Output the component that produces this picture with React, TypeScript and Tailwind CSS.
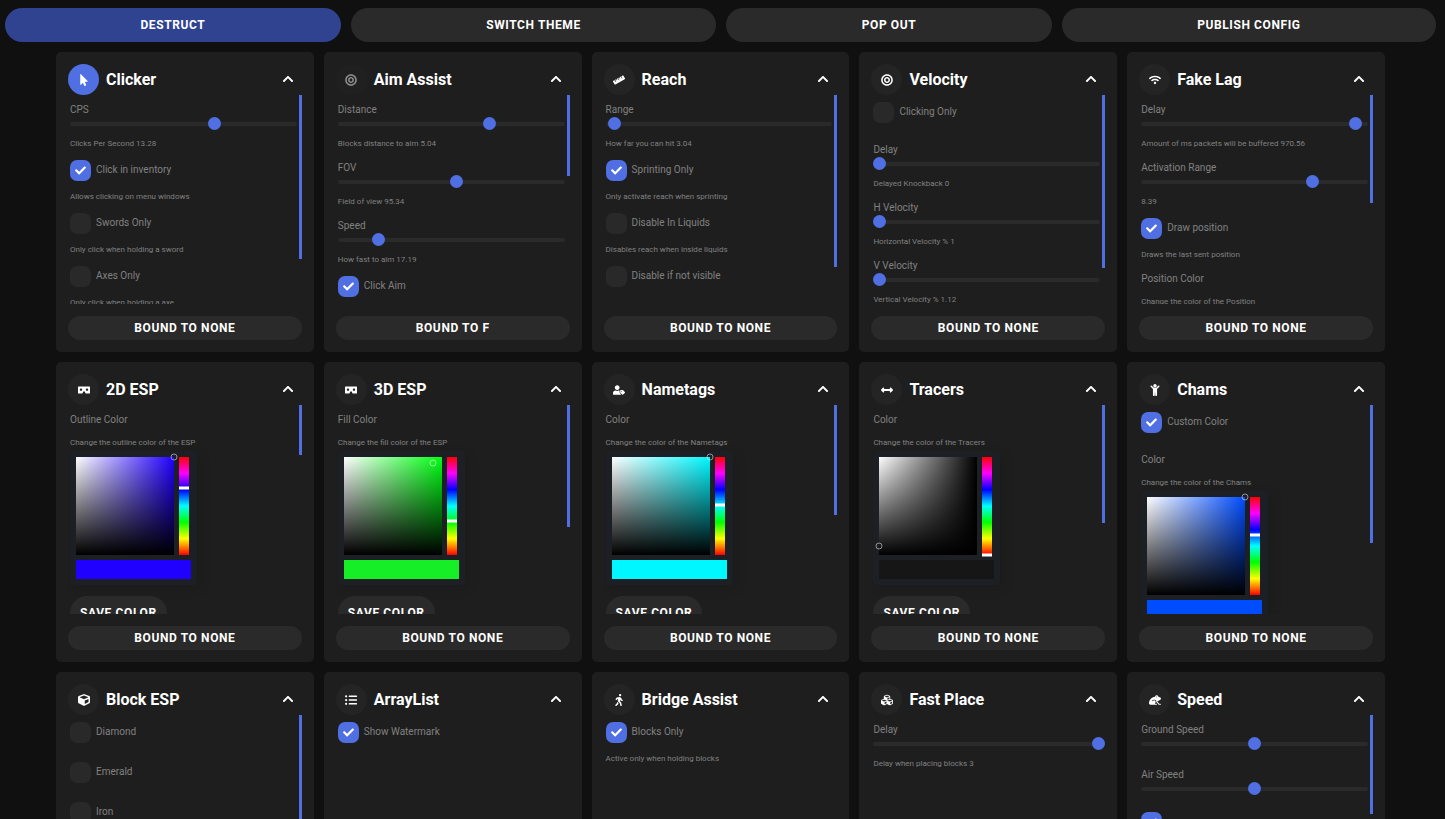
import { FC, ReactNode, useId } from 'react';
import { IconType } from 'react-icons';
import {
  FaArrowsAltH,
  FaBullseye,
  FaCheck,
  FaChevronUp,
  FaChild,
  FaCube,
  FaCubes,
  FaFrog,
  FaListUl,
  FaMousePointer,
  FaRuler,
  FaUserTag,
  FaVrCardboard,
  FaWalking,
  FaWifi,
} from 'react-icons/fa';
import clsx from 'clsx';

const Description: FC<{ text?: string }> = ({ text }) =>
  text ? <p className="h-[13px] text-[8px] leading-[11px] whitespace-nowrap">{text}</p> : null;

const Slider: FC<{ label: string; value: number; text?: string }> = ({ label, value, text }) => {
  const id = useId();
  return (
    <div className="pb-[2px]">
      <div className="flex h-[43px] flex-col pt-2">
        <label htmlFor={id} className="text-[10px] leading-[14px]">
          {label}
        </label>
        <input
          id={id}
          type="range"
          step="any"
          defaultValue={value}
          className="block h-[13px] w-full appearance-none bg-transparent [&::-webkit-slider-runnable-track]:h-1 [&::-webkit-slider-runnable-track]:rounded-full [&::-webkit-slider-runnable-track]:bg-[#2a2a2a] [&::-webkit-slider-thumb]:-mt-[5px] [&::-webkit-slider-thumb]:size-[13px] [&::-webkit-slider-thumb]:appearance-none [&::-webkit-slider-thumb]:rounded-full [&::-webkit-slider-thumb]:bg-[#4f6fe3]"
        />
      </div>
      <Description text={text} />
    </div>
  );
};

const Toggle: FC<{ label?: string; checked?: boolean; text?: string }> = ({ label, checked, text }) => (
  <div className="pb-[2px]">
    <label className="flex h-[38px] items-start gap-[5px] pt-[7px]">
      <span className="relative size-[21px]">
        <input
          type="checkbox"
          defaultChecked={checked}
          aria-label={label ?? 'Enabled'}
          className="peer block size-[21px] appearance-none rounded-[7px] bg-[#292929] checked:bg-[#4f6fe3]"
        />
        <FaCheck className="pointer-events-none absolute top-[5px] left-[5px] hidden size-[11px] text-white peer-checked:block" />
      </span>
      <span className="text-[10px] leading-5">{label}</span>
    </label>
    <Description text={text} />
  </div>
);

interface ColorProps {
  label: string;
  text: string;
  hue: string;
  color: string;
  x: number;
  y: number;
  huePos: number;
}

const ColorPicker: FC<ColorProps> = ({ label, text, hue, color, x, y, huePos }) => (
  <div className="pt-2">
    <h3 className="mb-[10px] text-[10px] leading-[14px]">{label}</h3>
    <Description text={text} />
    <div className="mt-px w-[127px] rounded-sm bg-[#1c2025] p-[6px] shadow-[4px_4px_12px_rgba(0,0,0,0.1)]">
      <div className="flex gap-[5px]">
        <div
          className="relative size-[98px]"
          style={{
            backgroundImage: `linear-gradient(to top, #000, transparent), linear-gradient(to right, #fff, ${hue})`,
          }}
        >
          <span
            className="absolute size-[7px] -translate-x-1/2 -translate-y-1/2 rounded-full border border-white/50"
            style={{ left: x, top: y }}
          />
        </div>
        <div className="relative h-[98px] w-[10px] bg-[linear-gradient(to_bottom,#f00,#f0f,#00f,#0ff,#0f0,#ff0,#f00)]">
          <span className="absolute inset-x-0 h-[3px] -translate-y-1/2 bg-white" style={{ top: huePos }} />
        </div>
      </div>
      <div className="mt-[5px] h-[19px]" style={{ backgroundColor: color }} />
    </div>
    <button className="mt-[11px] h-[34px] rounded-full bg-[#2a2a2a] px-[10px] text-xs font-bold tracking-wider text-white">
      SAVE COLOR
    </button>
  </div>
);

interface CardProps {
  title: string;
  icon: IconType;
  state?: 'on' | 'idle' | 'off';
  bind?: string;
  bar?: number;
  children: ReactNode;
}

const ModuleCard: FC<CardProps> = ({ title, icon: Icon, state = 'idle', bind = 'NONE', bar, children }) => (
  <section className="min-w-0 rounded-[5px] bg-[#1e1e1e] p-3">
    <header className="flex items-center gap-[7px]">
      <button
        aria-label={`Toggle ${title}`}
        className={clsx(
          'flex size-[31px] items-center justify-center rounded-full',
          state === 'on' && 'bg-[#4f6fe3] text-white',
          state === 'idle' && 'bg-[#242424] text-white',
          state === 'off' && 'bg-[#202020] text-[#8f8f8f]',
        )}
      >
        <Icon className="size-3" />
      </button>
      <h2 className="flex-1 text-base leading-5 font-bold text-white">{title}</h2>
      <button aria-label={`Collapse ${title}`} className="mr-2 pb-px text-white">
        <FaChevronUp className="size-3" />
      </button>
    </header>
    <div className="flex h-[209px] overflow-hidden pl-[2px] text-[#818181]">
      <div className="min-w-0 flex-1">{children}</div>
      {bar && <div className="ml-[2px] w-[3px] bg-[#4f6fe3]" style={{ height: bar }} />}
    </div>
    <button className="mt-3 block h-6 w-full rounded-full bg-[#2a2a2a] text-xs font-bold tracking-wider text-white">
      BOUND TO {bind}
    </button>
  </section>
);

const App: FC = () => {
  return (
    <div className="h-screen overflow-hidden bg-[#101010] pt-2 pr-1 font-['Roboto',sans-serif]">
      <nav className="flex gap-[10px] px-[5px] text-xs font-bold tracking-wider text-white">
        <button className="h-[34px] flex-auto rounded-full bg-[#304390]">DESTRUCT</button>
        <button className="h-[34px] flex-auto rounded-full bg-[#2a2a2a]">SWITCH THEME</button>
        <button className="h-[34px] flex-auto rounded-full bg-[#2a2a2a]">POP OUT</button>
        <button className="h-[34px] flex-auto rounded-full bg-[#2a2a2a]">PUBLISH CONFIG</button>
      </nav>

      <main className="mt-[10px] grid grid-cols-5 gap-[10px] px-14">
        <ModuleCard title="Clicker" icon={FaMousePointer} state="on" bar={164}>
          <Slider label="CPS" value={64.7} text="Clicks Per Second 13.28" />
          <Toggle label="Click in inventory" checked text="Allows clicking on menu windows" />
          <Toggle label="Swords Only" text="Only click when holding a sword" />
          <Toggle label="Axes Only" text="Only click when holding a axe" />
        </ModuleCard>
        <ModuleCard title="Aim Assist" icon={FaBullseye} state="off" bind="F" bar={81}>
          <Slider label="Distance" value={67.8} text="Blocks distance to aim 5.04" />
          <Slider label="FOV" value={52.7} text="Field of view 95.34" />
          <Slider label="Speed" value={16.1} text="How fast to aim 17.19" />
          <Toggle label="Click Aim" checked />
        </ModuleCard>
        <ModuleCard title="Reach" icon={FaRuler} bar={172}>
          <Slider label="Range" value={1.2} text="How far you can hit 3.04" />
          <Toggle label="Sprinting Only" checked text="Only activate reach when sprinting" />
          <Toggle label="Disable In Liquids" text="Disables reach when inside liquids" />
          <Toggle label="Disable if not visible" />
        </ModuleCard>
        <ModuleCard title="Velocity" icon={FaBullseye} bar={173}>
          <Toggle label="Clicking Only" />
          <Slider label="Delay" value={0} text="Delayed Knockback 0" />
          <Slider label="H Velocity" value={0} text="Horizontal Velocity % 1" />
          <Slider label="V Velocity" value={0} text="Vertical Velocity % 1.12" />
        </ModuleCard>
        <ModuleCard title="Fake Lag" icon={FaWifi} bar={108}>
          <Slider label="Delay" value={97.1} text="Amount of ms packets will be buffered 970.56" />
          <Slider label="Activation Range" value={77} text="8.39" />
          <Toggle label="Draw position" checked text="Draws the last sent position" />
          <ColorPicker
            label="Position Color"
            text="Change the color of the Position"
            hue="#00f"
            color="#00f"
            x={98}
            y={0}
            huePos={33}
          />
        </ModuleCard>

        <ModuleCard title="2D ESP" icon={FaVrCardboard} bar={50}>
          <ColorPicker
            label="Outline Color"
            text="Change the outline color of the ESP"
            hue="#2000ff"
            color="#2000ff"
            x={98}
            y={0}
            huePos={31}
          />
        </ModuleCard>
        <ModuleCard title="3D ESP" icon={FaVrCardboard} bar={122}>
          <ColorPicker
            label="Fill Color"
            text="Change the fill color of the ESP"
            hue="#00ff12"
            color="#16ee27"
            x={89}
            y={6}
            huePos={64}
          />
        </ModuleCard>
        <ModuleCard title="Nametags" icon={FaUserTag} bar={110}>
          <ColorPicker
            label="Color"
            text="Change the color of the Nametags"
            hue="#00f7ff"
            color="#00f7ff"
            x={98}
            y={0}
            huePos={48}
          />
        </ModuleCard>
        <ModuleCard title="Tracers" icon={FaArrowsAltH} bar={118}>
          <ColorPicker
            label="Color"
            text="Change the color of the Tracers"
            hue="#000"
            color="#161616"
            x={0}
            y={89}
            huePos={98}
          />
        </ModuleCard>
        <ModuleCard title="Chams" icon={FaChild} bar={138}>
          <Toggle label="Custom Color" checked />
          <ColorPicker
            label="Color"
            text="Change the color of the Chams"
            hue="#004cff"
            color="#004cff"
            x={98}
            y={0}
            huePos={38}
          />
        </ModuleCard>

        <ModuleCard title="Block ESP" icon={FaCube} bar={140}>
          <Toggle label="Diamond" />
          <Toggle label="Emerald" />
          <Toggle label="Iron" />
        </ModuleCard>
        <ModuleCard title="ArrayList" icon={FaListUl}>
          <Toggle label="Show Watermark" checked />
        </ModuleCard>
        <ModuleCard title="Bridge Assist" icon={FaWalking}>
          <Toggle label="Blocks Only" checked text="Active only when holding blocks" />
        </ModuleCard>
        <ModuleCard title="Fast Place" icon={FaCubes}>
          <Slider label="Delay" value={100} text="Delay when placing blocks 3" />
        </ModuleCard>
        <ModuleCard title="Speed" icon={FaFrog} bar={99}>
          <Slider label="Ground Speed" value={50} />
          <Slider label="Air Speed" value={50} />
          <Toggle checked />
        </ModuleCard>
      </main>
    </div>
  );
};

export default App;
